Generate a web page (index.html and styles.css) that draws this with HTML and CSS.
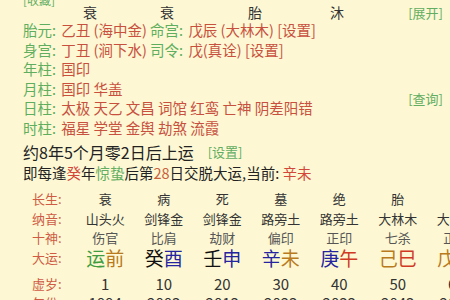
FILE: index.html
```html
<!DOCTYPE html>
<html lang="zh-CN">
<head>
    <meta charset="UTF-8">
    <meta name="viewport" content="width=device-width, initial-scale=1.0">
    <title>排盘</title>
    <link rel="stylesheet" href="styles.css">
</head>
<body>

<div class="page">
    <div class="fav-row"><span class="link">[收藏]</span></div>

    <div class="pillars">
        <span>衰</span>
        <span>衰</span>
        <span>胎</span>
        <span>沐</span>
        <span class="link expand">[展开]</span>
    </div>

    <div class="info">
        <div class="line">
            <span class="lbl">胎元:</span> <span class="val">乙丑 (海中金)</span>
            <span class="lbl">命宫:</span> <span class="val">戊辰 (大林木)</span>
            <span class="val">[设置]</span>
        </div>
        <div class="line">
            <span class="lbl">身宫:</span> <span class="val">丁丑 (涧下水)</span>
            <span class="lbl">司令:</span> <span class="val">戊(真诠)</span>
            <span class="val">[设置]</span>
        </div>
        <div class="line"><span class="lbl">年柱:</span> <span class="val">国印</span></div>
        <div class="line"><span class="lbl">月柱:</span> <span class="val">国印 华盖</span></div>
        <div class="line split">
            <span><span class="lbl">日柱:</span> <span class="val">太极 天乙 文昌 词馆 红鸾 亡神 阴差阳错</span></span>
            <span class="link query">[查询]</span>
        </div>
        <div class="line"><span class="lbl">时柱:</span> <span class="val">福星 学堂 金舆 劫煞 流霞</span></div>
    </div>

    <div class="start-line">约8年5个月零2日后上运<span class="link small">[设置]</span></div>
    <div class="switch-line">即每逢<span class="red">癸</span>年<span class="green">惊蛰</span>后第<span class="num">28</span>日交脱大运,当前: <span class="red">辛未</span></div>

    <div class="luck">
        <div class="row">
            <span class="head">长生:</span>
            <span>衰</span><span>病</span><span>死</span><span>墓</span><span>绝</span><span>胎</span><span>养</span>
        </div>
        <div class="row">
            <span class="head">纳音:</span>
            <span>山头火</span><span>剑锋金</span><span>剑锋金</span><span>路旁土</span><span>路旁土</span><span>大林木</span><span>大林木</span>
        </div>
        <div class="row gods">
            <span class="head">十神:</span>
            <span>伤官</span><span>比肩</span><span>劫财</span><span>偏印</span><span>正印</span><span>七杀</span><span>正官</span>
        </div>
        <div class="row big">
            <span class="head">大运:</span>
            <span><i class="wood">运</i><i class="earth">前</i></span>
            <span><i class="water">癸</i><i class="metal">酉</i></span>
            <span><i class="water">壬</i><i class="metal">申</i></span>
            <span><i class="metal">辛</i><i class="earth">未</i></span>
            <span><i class="metal">庚</i><i class="fire">午</i></span>
            <span><i class="earth">己</i><i class="fire">巳</i></span>
            <span><i class="earth">戊</i><i class="earth">辰</i></span>
        </div>
        <div class="row age first-age">
            <span class="head">虚岁:</span>
            <span>1</span><span>10</span><span>20</span><span>30</span><span>40</span><span>50</span><span>60</span>
        </div>
        <div class="row age">
            <span class="head">年份:</span>
            <span>1994</span><span>2003</span><span>2013</span><span>2023</span><span>2033</span><span>2043</span><span>2053</span>
        </div>
    </div>
</div>

</body>
</html>
```

FILE: styles.css
```css
html, body {
    margin: 0;
    overflow: hidden;
}
body {
    font-family: "Noto Sans CJK SC", "Noto Sans", sans-serif;
    background-color: #fdf8d3;
    color: #333;
    width: 450px;
    height: 300px;
}
.page {
    margin-top: -9px;
    padding: 0 7px 0 23px;
    overflow: hidden;
}
.link {
    color: #62ad62;
    font-size: 12px;
}
.fav-row {
    height: 14px;
    line-height: 14px;
}
.pillars {
    display: grid;
    grid-template-columns: 77px 88px 82px auto 1fr;
    padding-left: 60px;
    height: 15px;
    line-height: 15px;
    font-size: 14px;
    color: #333;
}
.pillars .expand {
    justify-self: end;
    font-size: 13px;
}
.info {
    font-size: 14.5px;
}
.line {
    line-height: 19.5px;
    white-space: nowrap;
}
.lbl {
    color: #5fae5f;
    margin-right: 2px;
}
.val {
    color: #c8503f;
}
.split {
    display: flex;
    justify-content: space-between;
    align-items: flex-start;
}
.query {
    font-size: 13px;
    margin-top: -9px;
}
.start-line {
    margin-top: 4px;
    line-height: 22px;
    font-size: 16px;
    color: #222;
}
.start-line .small {
    margin-left: 14px;
    font-size: 13px;
    vertical-align: 2px;
}
.switch-line {
    line-height: 20px;
    font-size: 14.5px;
    color: #222;
    white-space: nowrap;
}
.red {
    color: #d2473a;
}
.green {
    color: #62ad62;
}
.num {
    color: #c8603c;
}
.luck {
    margin-top: 6px;
    margin-left: 9px;
}
.row {
    display: grid;
    grid-template-columns: 44px repeat(7, 58.5px);
    height: 19px;
    line-height: 19px;
    font-size: 13px;
    color: #333;
    white-space: nowrap;
}
.row:first-child {
    height: 20px;
    line-height: 20px;
}
.row span {
    text-align: center;
}
.row .head {
    text-align: left;
    color: #cf5b45;
    font-size: 13px;
}
.gods span {
    color: #555;
}
.big {
    height: 22px;
    line-height: 22px;
    font-size: 19px;
}
.big i {
    font-style: normal;
}
.age {
    font-size: 15px;
}
.first-age {
    margin-top: 5px;
}
.wood {
    color: #3f9d3f;
}
.earth {
    color: #b97a1e;
}
.water {
    color: #111;
}
.metal {
    color: #2424a0;
}
.fire {
    color: #d03a24;
}
```
